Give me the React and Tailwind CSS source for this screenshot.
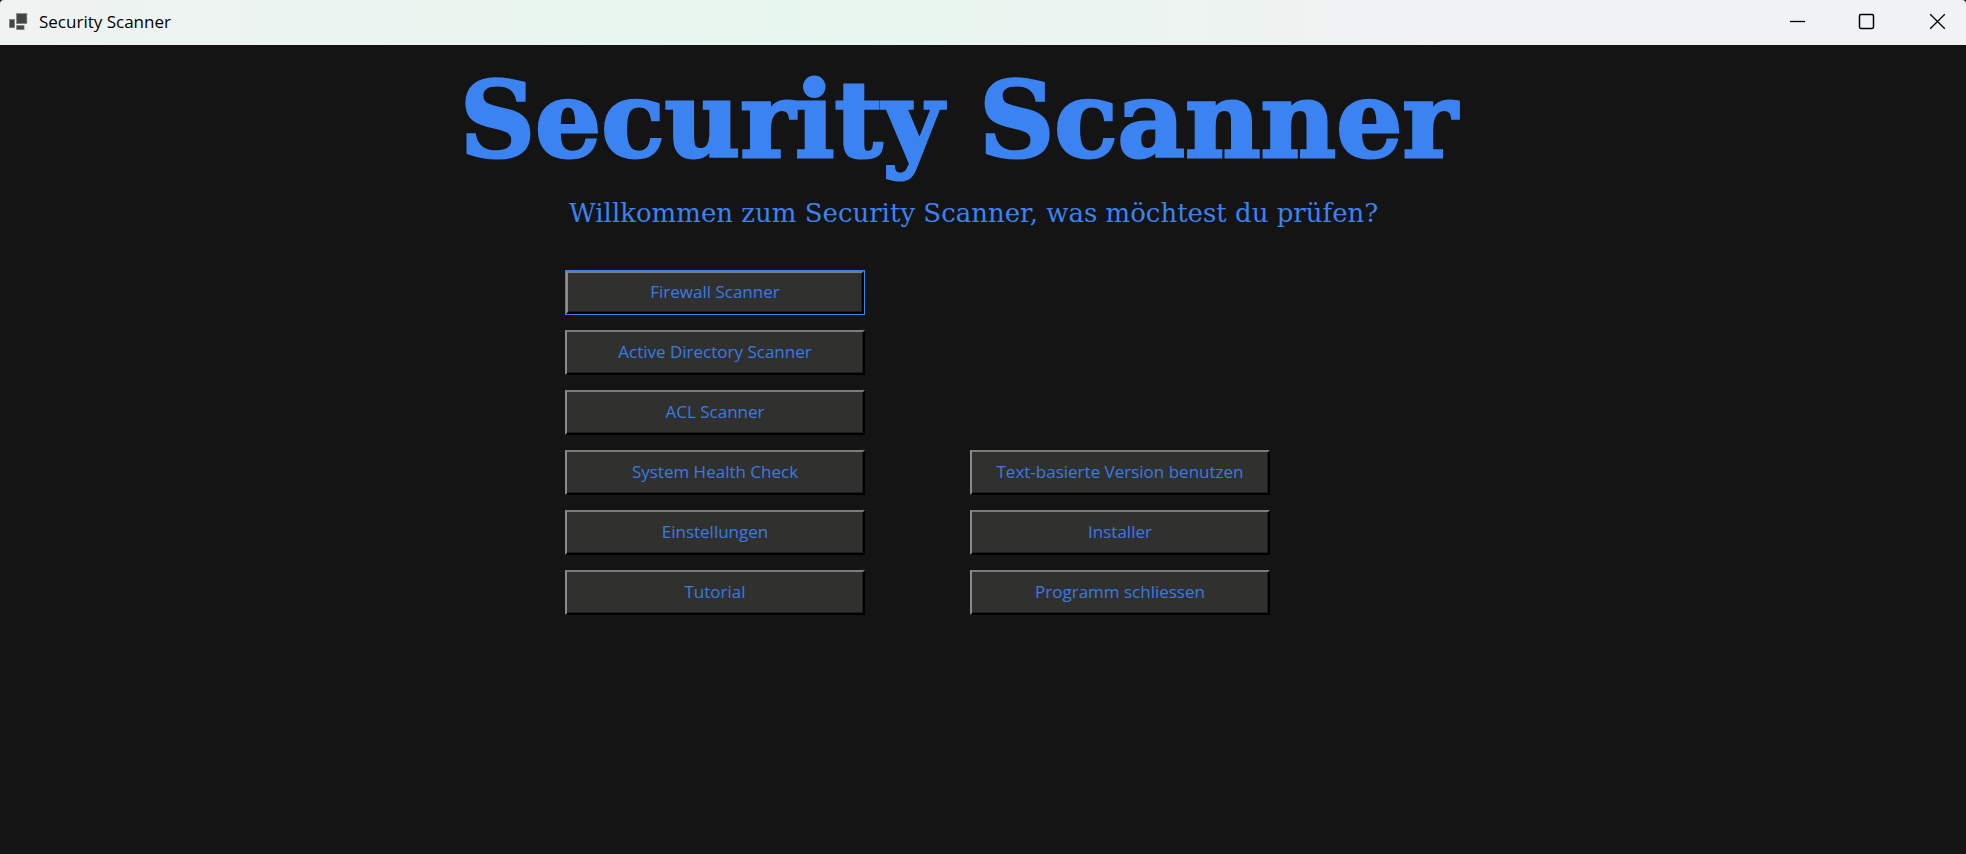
import React from 'react'
import clsx from 'clsx'

const SCANNERS = [
  'Firewall Scanner',
  'Active Directory Scanner',
  'ACL Scanner',
  'System Health Check',
  'Einstellungen',
  'Tutorial',
]

const ACTIONS = ['Text-basierte Version benutzen', 'Installer', 'Programm schliessen']

const AppIcon = () => (
  <svg width="20" height="18" viewBox="0 0 20 18" fill="#444444" stroke="#8a8c8c" strokeWidth="0.6" aria-hidden="true">
    <rect x="7.5" y="0.5" width="10.4" height="10.2" />
    <rect x="0.3" y="6.3" width="5.4" height="8.5" />
    <rect x="7.5" y="12.3" width="7.6" height="4.4" />
  </svg>
)

const CaptionButton = ({ label, className, children }) => (
  <button type="button" aria-label={label} className={clsx('flex h-full items-center justify-center hover:bg-black/5', className)}>
    <svg width="17" height="17" viewBox="0 0 17 17" fill="none" stroke="#000000" strokeWidth="1.3" aria-hidden="true">
      {children}
    </svg>
  </button>
)

const TitleBar = () => (
  <div className="flex h-[45px] items-center rounded-t-sm bg-linear-to-r from-[#eff3f2] via-[#e7f6ee] via-40% to-[#f1f2f4] to-75% pb-0.5">
    <div className="flex flex-1 items-center gap-2.5 pl-[9px]">
      <AppIcon />
      <span className="font-['Open_Sans',sans-serif] text-[17px] leading-6 text-black">Security Scanner</span>
    </div>
    <CaptionButton label="Minimieren" className="w-[69px]">
      <path d="M1 8.5h15" />
    </CaptionButton>
    <CaptionButton label="Maximieren" className="w-[69px]">
      <rect x="1.5" y="1.5" width="14" height="14" rx="1.4" strokeWidth="1.5" />
    </CaptionButton>
    <CaptionButton label="Schliessen" className="w-[65px] pl-2">
      <path d="M1.2 1.2l14.6 14.6M15.8 1.2L1.2 15.8" />
    </CaptionButton>
  </div>
)

// classic raised 3D button, the default one gets an extra frame
const FormButton = ({ label, isDefault }) => (
  <button
    type="button"
    className={clsx(
      "flex h-[45px] w-[300px] bg-[#30302f] font-['Open_Sans',sans-serif] text-[17px] leading-6 text-[#3a7be3]",
      isDefault && 'border border-[#3a80ee]'
    )}
  >
    <span className="flex h-full w-full items-center justify-center border-2 border-t-[#7b7b79] border-r-black border-b-black border-l-[#8b8b89] pb-0.5 shadow-[inset_-1px_-1px_0_#1c1c1b]">
      {label}
    </span>
  </button>
)

export default function App() {
  return (
    <div className="flex min-h-screen flex-col bg-[#141414]">
      <TitleBar />
      <main className="flex-1 text-[#3c83f2]">
        <h1 className="pt-[23px] pl-[460px] font-['DejaVu_Serif',serif] text-[104px] leading-[106px] font-bold whitespace-nowrap [-webkit-text-stroke:3px_#3c83f2]">
          Security Scanner
        </h1>
        <p className="pt-[22px] pl-[569px] font-['DejaVu_Serif',serif] text-[26px] leading-[34px] whitespace-nowrap">
          Willkommen zum Security Scanner, was möchtest du prüfen?
        </p>
        <div className="flex items-end gap-[105px] pt-10 pl-[565px]">
          <div className="flex flex-col gap-[15px]">
            {SCANNERS.map((label, i) => <FormButton key={label} label={label} isDefault={i === 0} />)}
          </div>
          <div className="flex flex-col gap-[15px]">
            {ACTIONS.map(label => <FormButton key={label} label={label} />)}
          </div>
        </div>
      </main>
    </div>
  )
}
